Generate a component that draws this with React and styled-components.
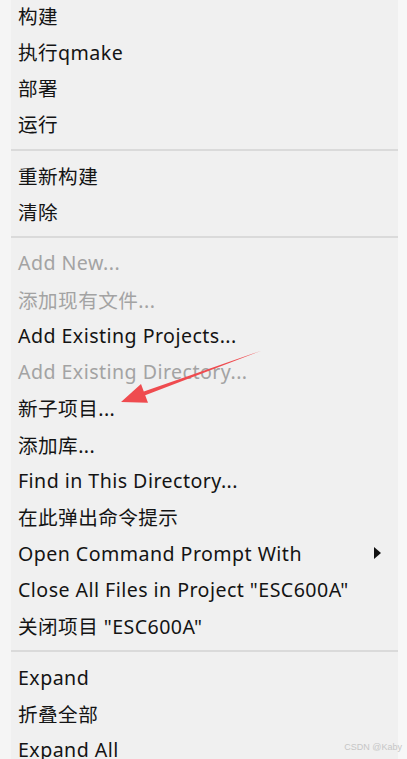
import React from "react";
import styled, { createGlobalStyle } from "styled-components";

const Global = createGlobalStyle`
  html, body { margin: 0; padding: 0; }
  body {
    width: 407px;
    height: 759px;
    overflow: hidden;
    background: #f6f6f6;
    font-family: "Noto Sans", "Noto Sans CJK SC", sans-serif;
  }
`;

const Page = styled.div`
  position: relative;
  width: 407px;
  height: 759px;
  display: flex;
  background: #f6f6f6;
  overflow: hidden;
`;

const LeftGutter = styled.div`
  width: 11px;
  flex: none;
  background: #f5f5f5;
`;

const RightGutter = styled.div`
  width: 9px;
  flex: none;
  background: #f7f7f7;
`;

const Menu = styled.div`
  flex: 1;
  background: #f0f0f0;
  display: flex;
  flex-direction: column;
  margin-top: -3.15px;
`;

const Item = styled.div`
  height: 36.3px;
  flex: none;
  display: flex;
  align-items: center;
  padding-left: 7px;
  padding-right: 17px;
  font-size: 19.6px;
  letter-spacing: 0.45px;
  color: ${(p) => (p.$disabled ? "#a3a3a3" : "#141414")};
  white-space: nowrap;
`;

const Label = styled.span`
  flex: 1;
`;

const SubArrow = styled.span`
  width: 0;
  height: 0;
  border-top: 6px solid transparent;
  border-bottom: 6px solid transparent;
  border-left: 7px solid #111;
`;

const Separator = styled.div`
  height: 15px;
  flex: none;
  display: flex;
  align-items: center;
  &::after {
    content: "";
    display: block;
    width: 100%;
    height: 2px;
    background: #dadada;
  }
`;

const Annotation = styled.svg`
  position: absolute;
  left: 0;
  top: 0;
  pointer-events: none;
`;

const Watermark = styled.div`
  position: absolute;
  right: 5px;
  top: 742px;
  font-family: "Liberation Sans", Arial, sans-serif;
  font-size: 9px;
  color: #c6c6c6;
`;

const groups = [
  [{ t: "构建" }, { t: "执行qmake" }, { t: "部署" }, { t: "运行" }],
  [{ t: "重新构建" }, { t: "清除" }],
  [
    { t: "Add New...", d: true },
    { t: "添加现有文件...", d: true },
    { t: "Add Existing Projects..." },
    { t: "Add Existing Directory...", d: true },
    { t: "新子项目..." },
    { t: "添加库..." },
    { t: "Find in This Directory..." },
    { t: "在此弹出命令提示" },
    { t: "Open Command Prompt With", sub: true },
    { t: 'Close All Files in Project "ESC600A"' },
    { t: '关闭项目 "ESC600A"' },
  ],
  [{ t: "Expand" }, { t: "折叠全部" }, { t: "Expand All" }],
];

export default function App() {
  return (
    <>
      <Global />
      <Page>
        <LeftGutter />
        <Menu>
          {groups.map((g, gi) => (
            <React.Fragment key={gi}>
              {gi > 0 && <Separator />}
              {g.map((it) => (
                <Item key={it.t} $disabled={it.d}>
                  <Label>{it.t}</Label>
                  {it.sub && <SubArrow />}
                </Item>
              ))}
            </React.Fragment>
          ))}
        </Menu>
        <RightGutter />
        <Annotation width="407" height="759" viewBox="0 0 407 759">
          <polygon
            points="121,402 141,384 143.8,391.4 262,350.5 145.2,395.2 148,402.7"
            fill="#ef4b4f"
          />
        </Annotation>
        <Watermark>CSDN @Kaby</Watermark>
      </Page>
    </>
  );
}
